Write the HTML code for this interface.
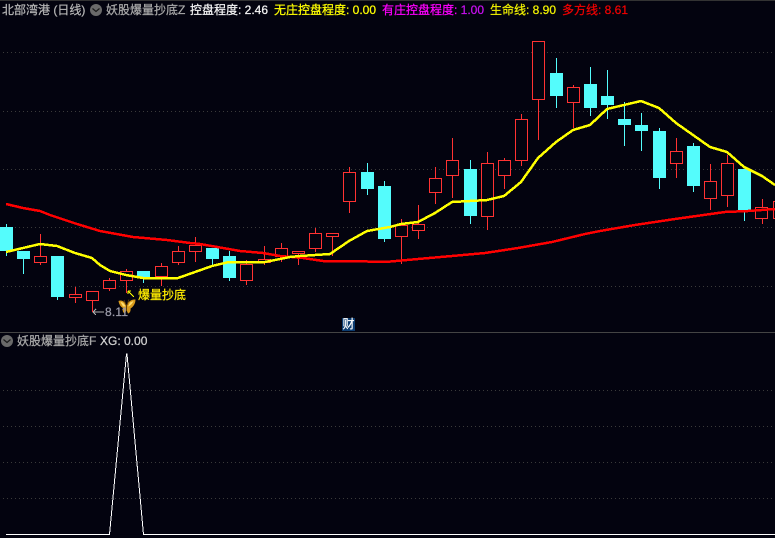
<!DOCTYPE html>
<html><head><meta charset="utf-8">
<style>
html,body{margin:0;padding:0;background:#03030f;}
#p{position:relative;width:775px;height:538px;overflow:hidden;background:#03030f;font-family:"Liberation Sans","Noto Sans CJK SC",sans-serif;font-size:12px;line-height:14px;}
#p span{position:absolute;white-space:nowrap;-webkit-text-stroke:0.25px currentColor;}
svg{position:absolute;left:0;top:0;}
</style></head><body><div id="p">
<svg width="775" height="538" viewBox="0 0 775 538">
<rect x="0" y="0" width="775" height="1" fill="#333"/>
<rect x="0" y="332" width="775" height="1" fill="#444"/>
<g stroke="#3a3a3a" stroke-width="1" stroke-dasharray="1 3" shape-rendering="crispEdges">
<path d="M3 52.5H775M3 111.5H775M3 169.5H775M3 227.5H775M3 286.5H775M3 390.5H775M3 426.5H775M3 462.5H775M3 498.5H775"/>
</g>
<g shape-rendering="crispEdges">
<!-- cyan wicks -->
<path stroke="#54fcfc" fill="none" d="M6.5 224V256M23.5 251V274M57.5 256V300M143.5 271V283M212.5 248V265M229.5 251V281M367.5 163V195M384.5 181V242M470.5 160V224M556.5 58V108M590.5 67V116M607.5 70V119M624.5 102V146M641.5 113V151M659.5 128V189M693.5 143V192M744.5 169V221"/>
<!-- cyan bodies -->
<g fill="#54fcfc">
<rect x="0" y="227" width="13" height="24"/>
<rect x="17" y="251" width="13" height="8"/>
<rect x="51" y="256" width="13" height="41"/>
<rect x="137" y="271" width="13" height="6"/>
<rect x="206" y="248" width="13" height="11"/>
<rect x="223" y="256" width="13" height="22"/>
<rect x="361" y="172" width="13" height="17"/>
<rect x="378" y="186" width="13" height="53"/>
<rect x="464" y="169" width="13" height="47"/>
<rect x="550" y="73" width="13" height="23"/>
<rect x="584" y="84" width="13" height="24"/>
<rect x="601" y="96" width="13" height="9"/>
<rect x="618" y="119" width="13" height="6"/>
<rect x="635" y="125" width="13" height="6"/>
<rect x="653" y="131" width="13" height="47"/>
<rect x="687" y="146" width="13" height="40"/>
<rect x="738" y="169" width="13" height="41"/>
</g>
<!-- red wicks -->
<path stroke="#ff3232" fill="none" d="M40.5 234V265M75.5 287V303M92.5 291V312M109.5 278V291M126.5 269V293M161.5 263V286M178.5 246V265M195.5 237V262M246.5 260V285M264.5 246V265M281.5 243V262M298.5 251V265M315.5 228V252M332.5 233V256M349.5 167V213M401.5 219V264M418.5 205V239M435.5 167V204M452.5 138V198M487.5 152V230M504.5 158V189M521.5 114V166M538.5 41V140M573.5 85V128M676.5 138V178M710.5 164V210M727.5 155V207M762.5 199V224"/>
<!-- red bodies -->
<g fill="#03030f" stroke="#ff3232">
<rect x="34.5" y="256.5" width="12" height="6"/>
<rect x="69.5" y="294.5" width="12" height="3"/>
<rect x="86.5" y="291.5" width="12" height="9"/>
<rect x="103.5" y="280.5" width="12" height="8"/>
<rect x="120.5" y="271.5" width="12" height="9"/>
<rect x="155.5" y="266.5" width="12" height="10"/>
<rect x="172.5" y="251.5" width="12" height="11"/>
<rect x="189.5" y="245.5" width="12" height="6"/>
<rect x="240.5" y="264.5" width="12" height="16"/>
<rect x="258.5" y="259.5" width="12" height="3"/>
<rect x="275.5" y="248.5" width="12" height="8"/>
<rect x="292.5" y="251.5" width="12" height="2"/>
<rect x="309.5" y="233.5" width="12" height="15"/>
<rect x="326.5" y="233.5" width="12" height="3"/>
<rect x="343.5" y="172.5" width="12" height="29"/>
<rect x="395.5" y="225.5" width="12" height="11"/>
<rect x="412.5" y="224.5" width="12" height="6"/>
<rect x="429.5" y="178.5" width="12" height="14"/>
<rect x="446.5" y="160.5" width="12" height="15"/>
<rect x="481.5" y="163.5" width="12" height="53"/>
<rect x="498.5" y="160.5" width="12" height="15"/>
<rect x="515.5" y="119.5" width="12" height="41"/>
<rect x="532.5" y="41.5" width="12" height="58"/>
<rect x="567.5" y="87.5" width="12" height="15"/>
<rect x="670.5" y="151.5" width="12" height="12"/>
<rect x="704.5" y="181.5" width="12" height="17"/>
<rect x="721.5" y="163.5" width="12" height="32"/>
<rect x="755.5" y="207.5" width="12" height="11"/>
<rect x="773.5" y="201.5" width="12" height="17"/>
</g>
<!-- MA lines -->
<polyline fill="none" stroke="#ff0000" stroke-width="2.5" points="6,204 23,208 40,211 50,215 77,224 100,231 133,237 167,240 190,243 200,244 223,248 240,251 263,253 280,256 303,258 323,261 350,261 385,262 418,259 452,256 485,253 518,248 552,242 585,234 600,231 635,225 675,219 725,212 748,211 775,209"/>
<polyline fill="none" stroke="#ffff00" stroke-width="2.5" points="6,252 23,248 40,244 57,246 75,253 92,258 100,265 110,271 126,275 143,278 161,278.5 178,278 195,272 212,266 229,262 246,262 265,262 290,257 300,256 330,254 349,241 367,231 390,227 401,224 418,222 435,213 452,202 470,201 487,200 504,196 521,182 538,158 556,142 573,130 590,125 607,109 624,105 641,101 659,108 676,123 693,135 710,147 727,152 744,167 762,176 775,185"/>
<!-- indicator -->
<polyline fill="none" stroke="#ffffff" stroke-width="1" points="6,534.5 109.5,534.5 126.5,354 127,354 143.5,534.5 775,534.5"/>
<!-- annotation arrows -->
<path stroke="#ffff00" stroke-width="1" fill="none" d="M128 291L134 297M128 291V294M128 291H131"/>
<path stroke="#b0b0b0" stroke-width="1" fill="none" d="M93 312H104M93 312L96 309M93 312L96 315"/>
</g>
<!-- butterfly -->
<g>
<path fill="#d89a1c" d="M118.5 301C122 299.5 125 302 126.5 305.5C128 302 131 299 135.5 299.5C135.5 304 133 307 130.5 308.5C131 311 129.5 313.5 128 313.5L126.5 310L125 313.5C123 313 122 310 123 308C120.5 307 119 304 118.5 301Z"/>
<path fill="#ffe070" d="M120.5 302C123 302 124.5 304 125.5 306.5L123 306.5ZM133.5 301C132.5 303.5 130.5 305.5 128 306.5L130 302.5Z"/>
<path stroke="#5a3c0c" stroke-width="1" fill="none" d="M126.5 305V311M126 305L124 300M127 305L129 299.5"/>
</g>
<!-- icons -->
<circle cx="96" cy="10" r="6" fill="#6a6a6a"/>
<path d="M92.5 8.5L96 11.5L99.5 8.5" fill="none" stroke="#1a1a1a" stroke-width="1.2"/>
<circle cx="7" cy="341" r="6" fill="#6a6a6a"/>
<path d="M3.5 339.5L7 342.5L10.5 339.5" fill="none" stroke="#1a1a1a" stroke-width="1.2"/>
<rect x="342" y="318" width="13" height="13" fill="#0c3c70"/>
</svg>
<span style="left:2px;top:3px;color:#b4b4b4">北部湾港 (日线)</span>
<span style="left:106px;top:3px;color:#a8a8a8">妖股爆量抄底Z</span>
<span style="left:190px;top:3px;color:#f4f4f4">控盘程度: 2.46</span>
<span style="left:274px;top:3px;color:#ffff00">无庄控盘程度: 0.00</span>
<span style="left:382px;top:3px;color:#ff00ff">有庄控盘程度: <b style="font-weight:normal;color:#c810f0">1.00</b></span>
<span style="left:490px;top:3px;color:#f0f000">生命线: 8.90</span>
<span style="left:562px;top:3px;color:#f00000">多方线: 8.61</span>
<span style="left:17px;top:334px;color:#a8a8a8">妖股爆量抄底F</span>
<span style="left:100px;top:334px;color:#d0d0d0">XG: 0.00</span>
<span style="left:138px;top:288px;color:#ffec00">爆量抄底</span>
<span style="left:105px;top:305px;color:#9a9aa8;letter-spacing:.2px">8.11</span>
<span style="left:342.5px;top:317px;color:#fff">财</span>
</div></body></html>
